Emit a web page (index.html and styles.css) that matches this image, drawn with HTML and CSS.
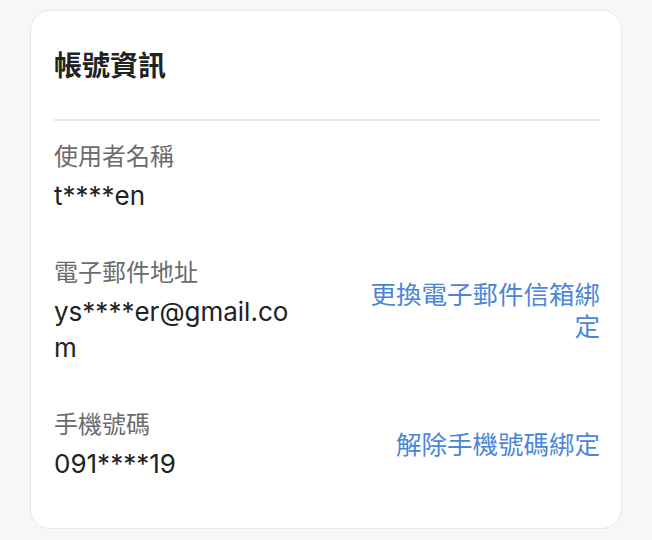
FILE: index.html
```html
<!DOCTYPE html>
<html lang="zh-Hant">
<head>
    <meta charset="UTF-8">
    <meta name="viewport" content="width=device-width, initial-scale=1.0">
    <title>帳號資訊</title>
    <link rel="stylesheet" href="styles.css">
</head>
<body>
    <div class="card">
        <div class="card-header">
            <h1>帳號資訊</h1>
        </div>

        <div class="info-list">
            <div class="info-row">
                <div class="info-main">
                    <div class="info-label">使用者名稱</div>
                    <div class="info-value">t****en</div>
                </div>
            </div>

            <div class="info-row">
                <div class="info-main">
                    <div class="info-label">電子郵件地址</div>
                    <div class="info-value">ys****er@gmail.com</div>
                </div>
                <a class="info-action" href="#">更換電子郵件信箱綁定</a>
            </div>

            <div class="info-row">
                <div class="info-main">
                    <div class="info-label">手機號碼</div>
                    <div class="info-value">091****19</div>
                </div>
                <a class="info-action" href="#">解除手機號碼綁定</a>
            </div>
        </div>
    </div>
</body>
</html>
```

FILE: styles.css
```css
body {
    margin: 0;
    padding: 10px 30px;
    background-color: #f6f7f9;
    font-family: "Liberation Sans", "Noto Sans CJK TC", sans-serif;
    color: #222222;
}

.card {
    background-color: #ffffff;
    border: 1px solid #e6e7eb;
    border-radius: 20px;
    padding: 0 21px 46px 23px;
}

.card-header {
    padding: 34px 0 30px;
    border-bottom: 2px solid #e8e8ea;
}

h1 {
    margin: 0;
    font-size: 28px;
    line-height: 44px;
    font-weight: bold;
    color: #222222;
}

.info-list {
    display: flex;
    flex-direction: column;
    gap: 41px;
    padding-top: 18px;
}

.info-row {
    display: flex;
    align-items: center;
    justify-content: space-between;
    gap: 60px;
}

.info-main {
    flex: 1 1 0;
    display: flex;
    flex-direction: column;
    gap: 3px;
    min-width: 0;
}

.info-label {
    font-size: 24px;
    line-height: 36px;
    color: #6b6b6d;
}

.info-value {
    font-family: Inter, "Noto Sans CJK TC", sans-serif;
    font-size: 26px;
    line-height: 36px;
    color: #222222;
    overflow-wrap: anywhere;
}

.info-action {
    flex: 1 1 0;
    font-size: 25.5px;
    line-height: 32px;
    color: #4a86d8;
    text-align: right;
    text-decoration: none;
}
```
